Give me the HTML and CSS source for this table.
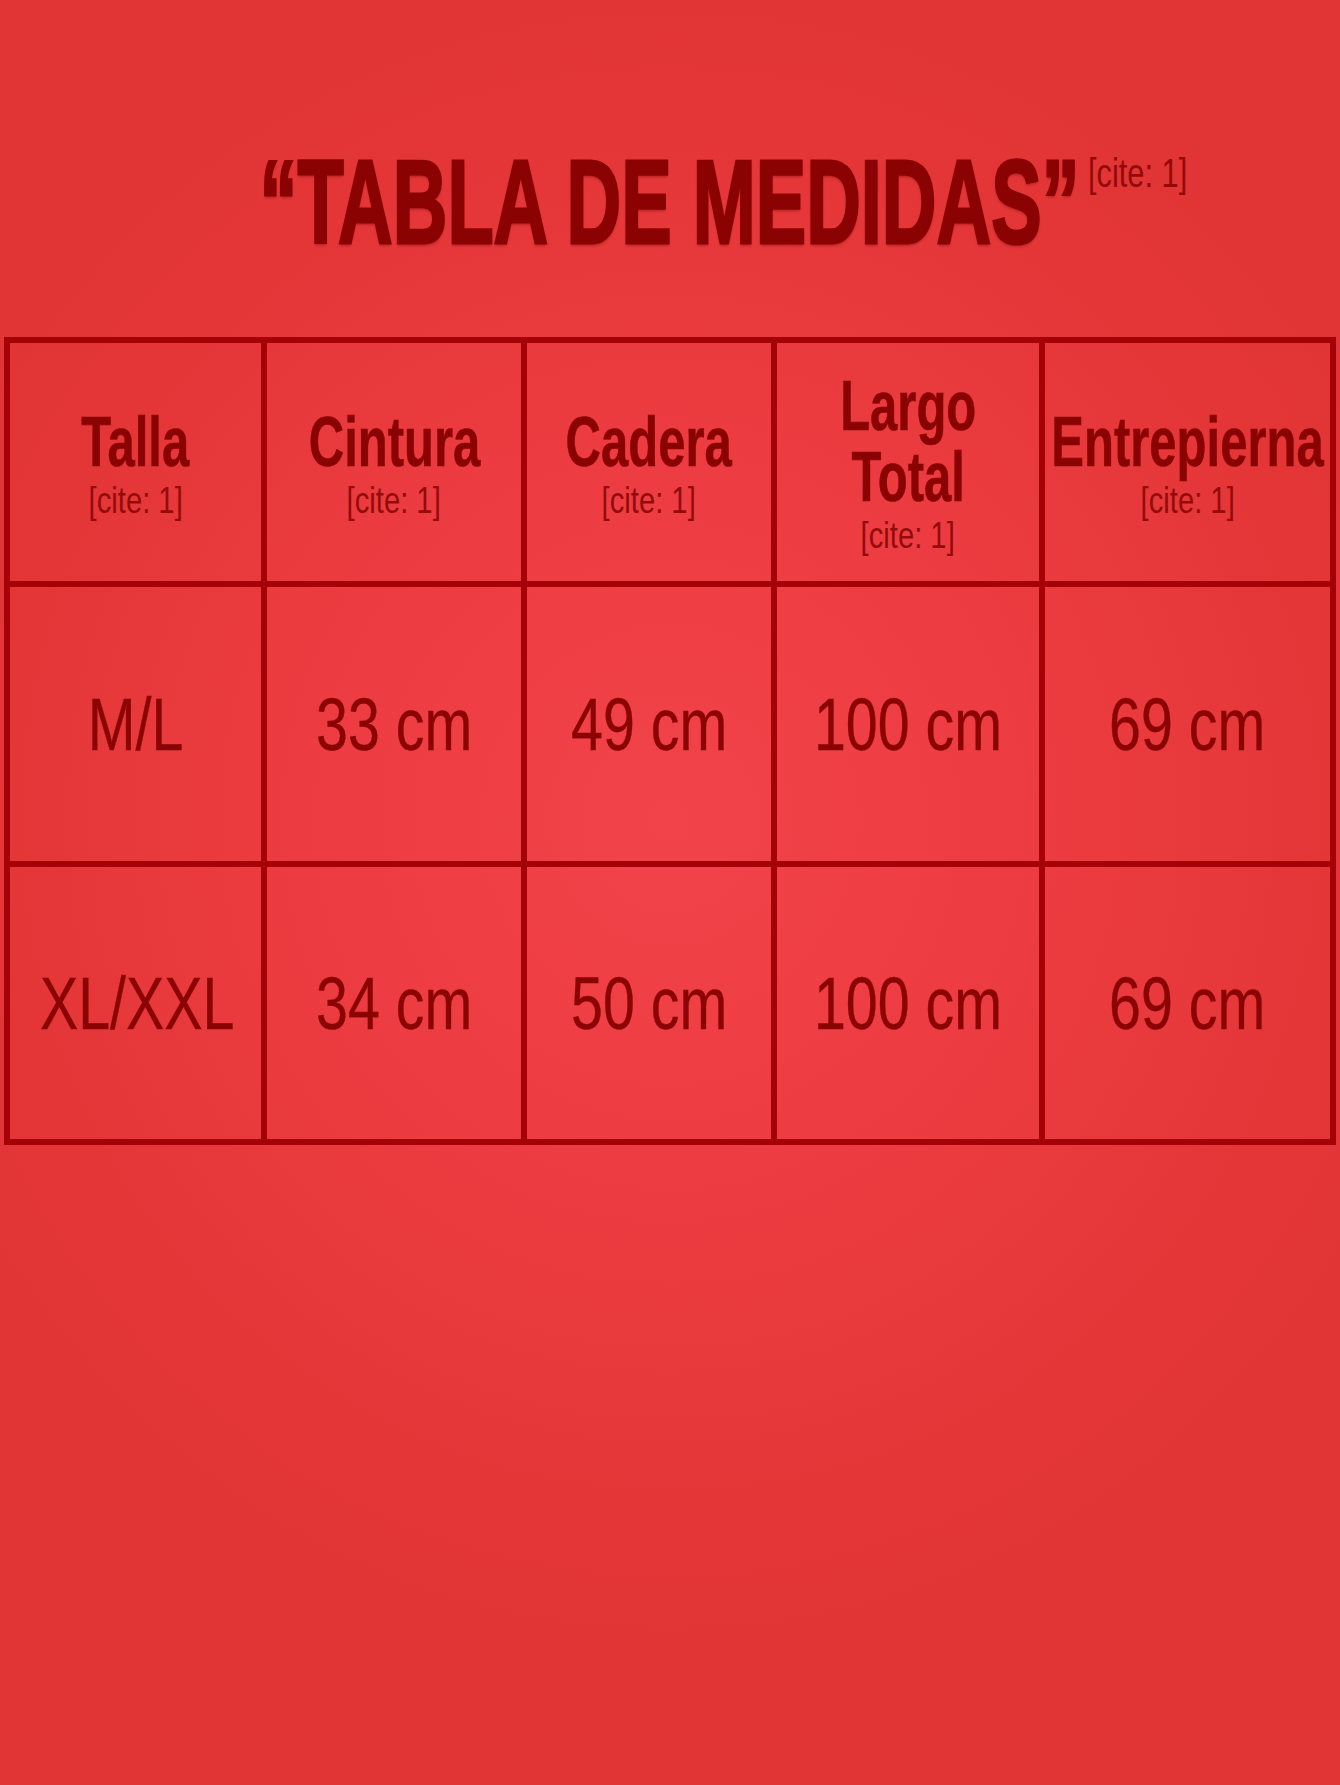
FILE: index.html
```html
<!DOCTYPE html>
<html lang="es">
<head>
<meta charset="utf-8">
<title>Tabla de medidas</title>
<link rel="stylesheet" href="styles.css">
</head>
<body>
<main class="page">
  <h1 class="title">
    <span class="title-text">“TABLA DE MEDIDAS”</span>
    <span class="title-cite">[cite: 1]</span>
  </h1>
  <table class="sizes">
    <colgroup>
      <col class="col-1">
      <col class="col-2">
      <col class="col-3">
      <col class="col-4">
      <col class="col-5">
    </colgroup>
    <thead>
      <tr class="row-head">
        <th><div class="hcell"><span class="head">Talla</span><span class="cite">[cite: 1]</span></div></th>
        <th><div class="hcell"><span class="head">Cintura</span><span class="cite">[cite: 1]</span></div></th>
        <th><div class="hcell"><span class="head">Cadera</span><span class="cite">[cite: 1]</span></div></th>
        <th><div class="hcell"><span class="head">Largo<br>Total</span><span class="cite">[cite: 1]</span></div></th>
        <th><div class="hcell"><span class="head">Entrepierna</span><span class="cite">[cite: 1]</span></div></th>
      </tr>
    </thead>
    <tbody>
      <tr class="row-1">
        <td><span class="val">M/L</span></td>
        <td><span class="val">33 cm</span></td>
        <td><span class="val">49 cm</span></td>
        <td><span class="val">100 cm</span></td>
        <td><span class="val">69 cm</span></td>
      </tr>
      <tr class="row-2">
        <td><span class="val">XL/XXL</span></td>
        <td><span class="val">34 cm</span></td>
        <td><span class="val">50 cm</span></td>
        <td><span class="val">100 cm</span></td>
        <td><span class="val">69 cm</span></td>
      </tr>
    </tbody>
  </table>
</main>
</body>
</html>
```

FILE: styles.css
```css
html, body {
  margin: 0;
  padding: 0;
}

body {
  width: 1340px;
  min-height: 1785px;
  font-family: "Liberation Sans", Arial, sans-serif;
  color: #8e0606;
  background-color: #e53738;
  background-image: radial-gradient(ellipse 62% 48% at 50% 46%, #f2434a 0%, #ec3c41 45%, #e43637 80%, #e13435 100%);
  background-repeat: no-repeat;
  background-size: 1340px 1785px;
}

.page {
  display: flex;
  flex-direction: column;
  align-items: flex-start;
}

.title {
  position: relative;
  align-self: stretch;
  margin: 0;
  padding-top: 142px;
  height: 119px;
  font-size: 119px;
  line-height: 119px;
  font-weight: 700;
  text-align: center;
  color: #8a0202;
}

.title-text {
  display: inline-block;
  transform: scaleX(0.636);
  transform-origin: 50% 50%;
  -webkit-text-stroke: 3px #8a0202;
  text-shadow: 0 3px 3px rgba(110, 0, 0, 0.35);
  white-space: nowrap;
}

.title-cite {
  position: absolute;
  top: 153px;
  left: calc(50% + 418px);
  font-size: 40px;
  line-height: 40px;
  font-weight: 400;
  white-space: nowrap;
  transform: scaleX(0.77);
  transform-origin: 0 50%;
  color: #930a0a;
}

.sizes {
  margin: 76px 0 0 4px;
  width: 1332px;
  table-layout: fixed;
  border-collapse: collapse;
  border: 6px solid #a50208;
}

.col-1 { width: 257px; }
.col-2 { width: 260px; }
.col-3 { width: 250px; }
.col-4 { width: 268px; }
.col-5 { width: 291px; }

.sizes th,
.sizes td {
  border: 6px solid #a50208;
  padding: 0;
  text-align: center;
  vertical-align: middle;
  overflow: visible;
  white-space: nowrap;
}

.row-head { height: 244px; }
.row-1 { height: 280px; }
.row-2 { height: 278px; }

.sizes th {
  padding-top: 6px;
}

.hcell {
  display: flex;
  flex-direction: column;
  align-items: center;
}

.head {
  flex: none;
  font-size: 70px;
  line-height: 71px;
  font-weight: 700;
  transform: scaleX(0.70);
  transform-origin: 50% 50%;
  -webkit-text-stroke: 0.6px #8a0303;
  color: #8a0303;
}

.cite {
  flex: none;
  font-size: 37px;
  line-height: 46px;
  font-weight: 400;
  transform: scaleX(0.79);
  transform-origin: 50% 50%;
  color: #940b0b;
}

.val {
  display: inline-block;
  font-size: 75px;
  line-height: 75px;
  font-weight: 400;
  transform: scaleX(0.765);
  transform-origin: 50% 50%;
  -webkit-text-stroke: 0.4px #8b0404;
  color: #8b0404;
}
```
